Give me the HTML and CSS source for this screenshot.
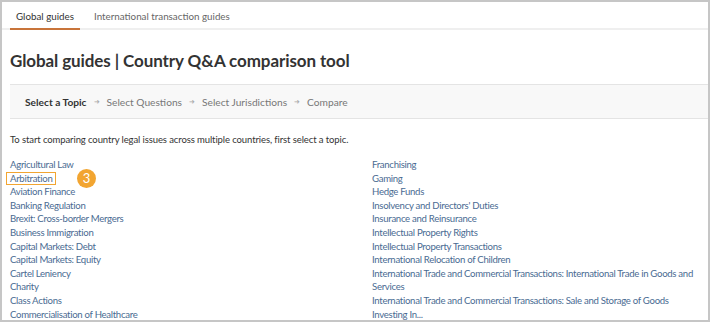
FILE: index.html
```html
<!DOCTYPE html>
<html lang="en">
<head>
    <meta charset="UTF-8">
    <title>Global guides – Country Q&amp;A comparison tool</title>
    <link rel="stylesheet" href="styles.css">
</head>
<body>

<div class="frame">
    <nav class="tabs">
        <a class="tab active" href="#">Global guides</a>
        <a class="tab" href="#">International transaction guides</a>
    </nav>

    <div class="content">
        <h1>Global guides | Country Q&amp;A comparison tool</h1>

        <div class="steps">
            <span class="step current">Select a Topic</span>
            <span class="arrow">&#10140;</span>
            <span class="step">Select Questions</span>
            <span class="arrow">&#10140;</span>
            <span class="step">Select Jurisdictions</span>
            <span class="arrow">&#10140;</span>
            <span class="step">Compare</span>
        </div>

        <p class="intro">To start comparing country legal issues across multiple countries, first select a topic.</p>

        <div class="topics">
            <ul>
                <li><a href="#">Agricultural Law</a></li>
                <li class="marked"><a href="#">Arbitration</a><span class="badge">3</span></li>
                <li><a href="#">Aviation Finance</a></li>
                <li><a href="#">Banking Regulation</a></li>
                <li><a href="#">Brexit: Cross-border Mergers</a></li>
                <li><a href="#">Business Immigration</a></li>
                <li><a href="#">Capital Markets: Debt</a></li>
                <li><a href="#">Capital Markets: Equity</a></li>
                <li><a href="#">Cartel Leniency</a></li>
                <li><a href="#">Charity</a></li>
                <li><a href="#">Class Actions</a></li>
                <li><a href="#">Commercialisation of Healthcare</a></li>
            </ul>
            <ul>
                <li><a href="#">Franchising</a></li>
                <li><a href="#">Gaming</a></li>
                <li><a href="#">Hedge Funds</a></li>
                <li><a href="#">Insolvency and Directors' Duties</a></li>
                <li><a href="#">Insurance and Reinsurance</a></li>
                <li><a href="#">Intellectual Property Rights</a></li>
                <li><a href="#">Intellectual Property Transactions</a></li>
                <li><a href="#">International Relocation of Children</a></li>
                <li><a href="#">International Trade and Commercial Transactions: International Trade in Goods and Services</a></li>
                <li><a href="#">International Trade and Commercial Transactions: Sale and Storage of Goods</a></li>
                <li><a href="#">Investing In...</a></li>
            </ul>
        </div>
    </div>
</div>

</body>
</html>
```

FILE: styles.css
```css
body {
    margin: 0;
    background: #fff;
    font-family: Lato, "Open Sans", sans-serif;
    color: #333;
}
.frame {
    width: 710px;
    height: 322px;
    box-sizing: border-box;
    border: 2px solid #c6c6c6;
    overflow: hidden;
}
.tabs {
    display: flex;
    gap: 8px;
    padding-left: 8px;
    border-bottom: 2px solid #efefef;
}
.tab {
    display: block;
    padding: 8px 6px 6px;
    margin-bottom: -2px;
    font-size: 9.8px;
    color: #666;
    text-decoration: none;
    border-bottom: 2px solid transparent;
}
.tab.active {
    color: #333;
    border-bottom-color: #c8743a;
}
.content {
    padding-left: 8px;
}
h1 {
    margin: 0;
    padding: 20px 0 13px;
    font-size: 17px;
    font-weight: 700;
    color: #333;
    letter-spacing: -0.1px;
}
.steps {
    display: flex;
    align-items: center;
    gap: 7px;
    height: 33px;
    padding-left: 15px;
    margin-right: -10px;
    background: #f8f8f8;
    border-top: 1px solid #e4e4e4;
    border-bottom: 1px solid #e4e4e4;
    font-size: 10.2px;
    color: #777;
}
.step.current {
    font-weight: 700;
    color: #333;
}
.arrow {
    font-size: 7px;
    color: #aaa;
}
.intro {
    margin: 15px 0 13px;
    font-size: 9.5px;
    letter-spacing: -0.1px;
    color: #333;
}
.topics {
    display: grid;
    grid-template-columns: 334px 334px;
    column-gap: 28px;
}
.topics ul {
    margin: 0;
    padding: 0;
    list-style: none;
}
.topics li {
    font-size: 9.6px;
    letter-spacing: -0.3px;
    line-height: 13.6px;
}
.topics a {
    color: #4a6b92;
    text-decoration: none;
}
.marked {
    position: relative;
}
.marked a {
    margin-left: -4px;
    padding: 0 3px;
    border: 1px solid #f2a531;
}
.badge {
    position: absolute;
    left: 67px;
    top: -3px;
    width: 19px;
    height: 19px;
    border-radius: 50%;
    background: #f2a531;
    color: #fff;
    font-size: 13px;
    letter-spacing: 0;
    line-height: 19px;
    text-align: center;
}
```
